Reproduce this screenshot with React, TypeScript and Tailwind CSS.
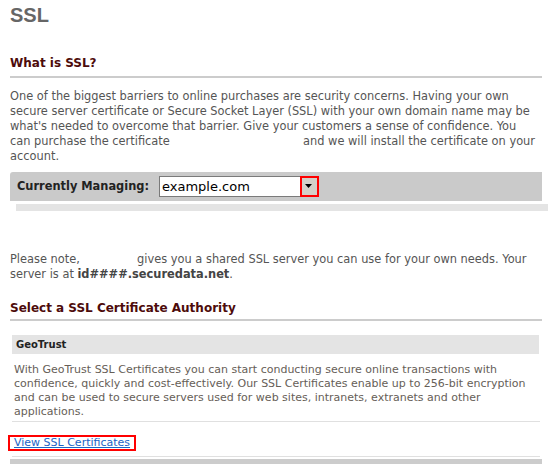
import React from 'react';

const verdana = { fontFamily: '"DejaVu Sans", Verdana, sans-serif' };

const App: React.FC = () => {
  return (
    <div className="w-[554px] h-[464px] overflow-hidden bg-white" style={verdana}>
      {/* Page title */}
      <h1
        className="pl-[10px] pt-[4px] text-[20px] leading-[22px] font-bold text-[#666666]"
        style={{ fontFamily: '"Liberation Sans", Arial, sans-serif' }}
      >
        SSL
      </h1>

      <div className="ml-[10px] w-[532px]">
        {/* What is SSL */}
        <h2 className="mt-[29px] text-[12px] leading-[16px] font-bold text-[#4d0b0b]">What is SSL?</h2>
        <div className="mt-[5px] h-[2px] bg-[#cccccc]" />
        <p className="mt-[11px] w-[526px] text-[11.4px] leading-[15px] text-[#555555]">
          One of the biggest barriers to online purchases are security concerns. Having your own secure
          server certificate or Secure Socket Layer (SSL) with your own domain name may be what's needed
          to overcome that barrier. Give your customers a sense of confidence. You can purchase the
          certificate <span className="inline-block w-[126px]" /> and we will install the certificate on your account.
        </p>

        {/* Currently managing */}
        <div className="mt-[8px] h-[29px] bg-[#cacaca] rounded-tl-[3px] flex items-center pl-[7px]">
          <span className="text-[11.4px] font-bold text-[#222222]">Currently Managing:</span>
          <div className="ml-[10px] w-[160px] h-[21px] bg-white border border-[#7a7a7a] flex items-center justify-between">
            <span className="pl-[2px] text-[13px] text-black">example.com</span>
            <div className="w-[19px] h-[21px] -mr-[1px] border-2 border-[#ff0000] bg-[#d4d0c8] flex items-center justify-center">
              <svg width="8" height="5" viewBox="0 0 8 5">
                <path d="M0 0h7l-3.5 4z" fill="#000" />
              </svg>
            </div>
          </div>
        </div>
      </div>
      <div className="ml-[16px] mt-[3px] w-[532px] h-[7px] bg-[#e4e4e4]" />

      <div className="ml-[10px] w-[532px]">
        <p className="mt-[41px] text-[11.4px] leading-[15px] text-[#555555]">
          Please note, <span className="inline-block w-[50px]" /> gives you a shared SSL server you can use for your own
          needs. Your server is at <b className="text-[#444444]">id####.securedata.net</b>.
        </p>

        {/* Select authority */}
        <h2 className="mt-[18px] text-[12px] leading-[16px] font-bold text-[#4d0b0b]">Select a SSL Certificate Authority</h2>
        <div className="mt-[3px] h-[2px] bg-[#cccccc]" />

        <div className="mt-[14px] ml-[2px] w-[527px] h-[19px] bg-[#e4e4e4] flex items-center pl-[4px]">
          <span className="text-[10px] font-bold text-[#222222]">GeoTrust</span>
        </div>
        <p className="ml-[4px] mt-[9px] w-[528px] text-[11px] leading-[14px] text-[#665e57]">
          With GeoTrust SSL Certificates you can start conducting secure online transactions with confidence,
          quickly and cost-effectively. Our SSL Certificates enable up to 256-bit encryption and can be used to
          secure servers used for web sites, intranets, extranets and other applications.
        </p>
        <div className="ml-[2px] mt-[2px] w-[528px] h-px bg-[#e0e0e0]" />
        <div className="mt-[7px] -ml-[2px]">
          <a
            href="#"
            className="inline-block border-2 border-[#ff0000] px-[4px] text-[11px] leading-[12px] text-[#1b63c6] underline"
          >
            View SSL Certificates
          </a>
        </div>
        <div className="ml-[2px] mt-[3px] w-[528px] h-px bg-[#e0e0e0]" />
        <div className="mt-[2px] h-[8px] bg-[#cccccc]" />
      </div>
    </div>
  );
};

export default App;
